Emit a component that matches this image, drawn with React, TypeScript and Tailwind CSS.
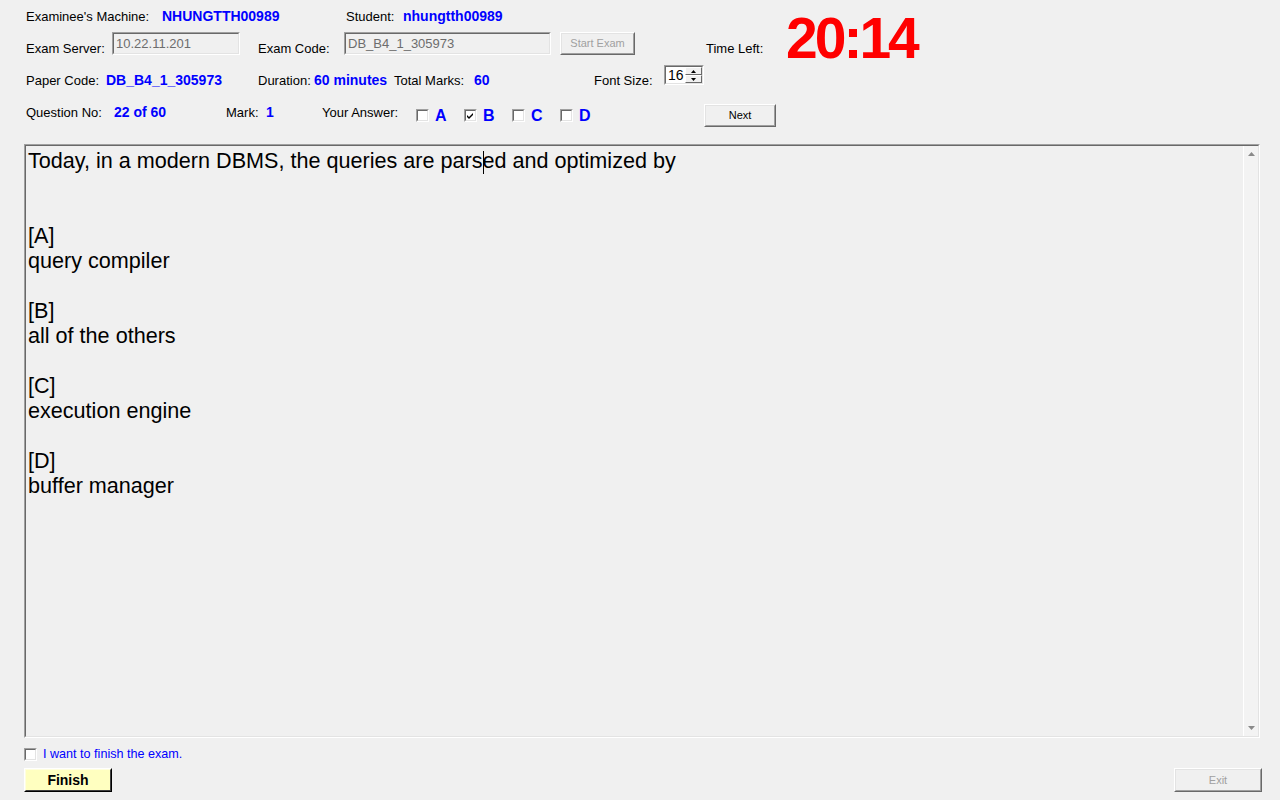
import React from "react";

function CheckBox({ checked = false }: { checked?: boolean }) {
  return (
    <div className="w-[13px] h-[13px] shrink-0 border border-t-[#a0a0a0] border-l-[#a0a0a0] border-r-white border-b-white">
      <div className="w-full h-full bg-white border border-t-[#696969] border-l-[#696969] border-r-[#e3e3e3] border-b-[#e3e3e3] flex items-center justify-center">
        {checked && (
          <svg width="7" height="7" viewBox="0 0 7 7">
            <path d="M0 3 L2 5 L6 1 L6 3 L2 7 L0 5 Z" fill="#000" />
          </svg>
        )}
      </div>
    </div>
  );
}

function Raised({
  className = "",
  inner = "",
  children,
}: {
  className?: string;
  inner?: string;
  children: React.ReactNode;
}) {
  return (
    <div className={`shrink-0 border border-t-white border-l-white border-r-[#696969] border-b-[#696969] ${className}`}>
      <div className={`w-full h-full border border-t-[#e3e3e3] border-l-[#e3e3e3] border-r-[#a0a0a0] border-b-[#a0a0a0] flex items-center justify-center text-[11px] ${inner}`}>
        {children}
      </div>
    </div>
  );
}

function Sunken({ className = "", children }: { className?: string; children?: React.ReactNode }) {
  return (
    <div className={`shrink-0 border border-t-[#a0a0a0] border-l-[#a0a0a0] border-r-white border-b-white ${className}`}>
      <div className="w-full h-full border border-t-[#696969] border-l-[#696969] border-r-[#e3e3e3] border-b-[#e3e3e3] flex items-center">
        {children}
      </div>
    </div>
  );
}

function Option({ letter, checked = false }: { letter: string; checked?: boolean }) {
  return (
    <div className="w-[48px] flex items-start">
      <div className="mt-[13px]">
        <CheckBox checked={checked} />
      </div>
      <span className="ml-[6px] mt-[12px] text-[16px] leading-[16px] font-bold text-[#0000ff]">{letter}</span>
    </div>
  );
}

const lines: string[] = [
  "",
  "",
  "[A]",
  "query compiler",
  "",
  "[B]",
  "all of the others",
  "",
  "[C]",
  "execution engine",
  "",
  "[D]",
  "buffer manager",
];

export default function App() {
  const lbl = "text-[13px] leading-[15px] text-black shrink-0";
  const val = "text-[14px] leading-[16px] font-bold text-[#0000ff] shrink-0";

  return (
    <div className="w-[1280px] h-[800px] bg-[#f0f0f0] font-['Liberation_Sans',Arial,sans-serif] text-black overflow-hidden flex flex-col">
      {/* Header */}
      <div className="flex">
        <div className="w-[786px] flex flex-col shrink-0">
          {/* Row 1 */}
          <div className="h-[32px] pl-[26px] flex items-center">
            <span className={`${lbl} w-[136px]`}>Examinee's Machine:</span>
            <span className={`${val} w-[184px]`}>NHUNGTTH00989</span>
            <span className={`${lbl} w-[57px]`}>Student:</span>
            <span className={val}>nhungtth00989</span>
          </div>

          {/* Row 2 */}
          <div className="h-[32px] pl-[26px] flex items-start">
            <span className={`${lbl} w-[86px] mt-[9px]`}>Exam Server:</span>
            <Sunken className="w-[128px] h-[23px]">
              <span className="pl-[2px] text-[13px] text-[#6d6d6d]">10.22.11.201</span>
            </Sunken>
            <span className={`${lbl} w-[86px] ml-[18px] mt-[9px]`}>Exam Code:</span>
            <Sunken className="w-[207px] h-[23px]">
              <span className="pl-[2px] text-[13px] text-[#6d6d6d]">DB_B4_1_305973</span>
            </Sunken>
            <Raised className="w-[75px] h-[23px] ml-[9px]" inner="text-[#a0a0a0]">
              Start Exam
            </Raised>
            <span className={`${lbl} ml-[71px] mt-[9px]`}>Time Left:</span>
          </div>

          {/* Row 3 */}
          <div className="h-[32px] pl-[26px] flex items-start">
            <span className={`${lbl} w-[80px] mt-[9px]`}>Paper Code:</span>
            <span className={`${val} w-[152px] mt-[8px]`}>DB_B4_1_305973</span>
            <span className={`${lbl} w-[56px] mt-[9px]`}>Duration:</span>
            <span className={`${val} w-[80px] mt-[8px]`}>60 minutes</span>
            <span className={`${lbl} w-[80px] mt-[9px]`}>Total Marks:</span>
            <span className={`${val} w-[120px] mt-[8px]`}>60</span>
            <span className={`${lbl} w-[70px] mt-[9px]`}>Font Size:</span>
            <Sunken className="w-[40px] h-[20px] mt-[1px]">
              <div className="flex-1 h-full bg-white flex items-center pl-[2px] text-[14px] leading-none">16</div>
              <div className="w-[17px] h-full flex flex-col bg-[#f0f0f0]">
                <div className="flex-1 border border-t-white border-l-white border-r-[#696969] border-b-[#696969] flex items-center justify-center">
                  <svg width="5" height="3" viewBox="0 0 5 3">
                    <path d="M2.5 0 L5 3 L0 3 Z" fill="#000" />
                  </svg>
                </div>
                <div className="flex-1 border border-t-white border-l-white border-r-[#696969] border-b-[#696969] flex items-center justify-center">
                  <svg width="5" height="3" viewBox="0 0 5 3">
                    <path d="M0 0 L5 0 L2.5 3 Z" fill="#000" />
                  </svg>
                </div>
              </div>
            </Sunken>
          </div>

          {/* Row 4 */}
          <div className="h-[48px] pl-[26px] flex items-start">
            <span className={`${lbl} w-[88px] mt-[9px]`}>Question No:</span>
            <span className={`${val} w-[112px] mt-[8px]`}>22 of 60</span>
            <span className={`${lbl} w-[40px] mt-[9px]`}>Mark:</span>
            <span className={`${val} w-[56px] mt-[8px]`}>1</span>
            <span className={`${lbl} w-[94px] mt-[9px]`}>Your Answer:</span>
            <Option letter="A" />
            <Option letter="B" checked />
            <Option letter="C" />
            <Option letter="D" />
            <Raised className="w-[72px] h-[23px] ml-[96px] mt-[8px]" inner="text-black">
              Next
            </Raised>
          </div>
        </div>

        {/* Timer */}
        <div className="mt-[10px] text-[57px] leading-none font-bold text-[#ff0000] tracking-[-3px]">20:14</div>
      </div>

      {/* Question area */}
      <div className="ml-[24px] w-[1236px] h-[594px] border border-t-[#a0a0a0] border-l-[#a0a0a0] border-r-white border-b-white">
        <div className="w-full h-full border border-t-[#696969] border-l-[#696969] border-r-[#e3e3e3] border-b-[#e3e3e3] flex">
          <div className="flex-1 pl-[2px] pt-[2px] text-[21.6px] leading-[25px] text-black">
            <div className="h-[25px] whitespace-nowrap">
              Today, in a modern DBMS, the queries are pars
              <span className="inline-block w-px h-[23px] bg-black align-[-6px] -mr-px" />
              ed and optimized by
            </div>
            {lines.map((t, i) => (
              <div key={i} className="h-[25px] whitespace-nowrap">
                {t}
              </div>
            ))}
          </div>
          <div className="w-[15px] h-full border-l border-l-white bg-[#f3f3f3] flex flex-col justify-between items-center py-[6px]">
            <svg width="7" height="4" viewBox="0 0 7 4">
              <path d="M3.5 0 L7 4 L0 4 Z" fill="#8a8a8a" />
            </svg>
            <svg width="7" height="4" viewBox="0 0 7 4">
              <path d="M0 0 L7 0 L3.5 4 Z" fill="#8a8a8a" />
            </svg>
          </div>
        </div>
      </div>

      {/* Finish checkbox */}
      <div className="mt-[10px] pl-[24px] flex items-center h-[13px]">
        <CheckBox />
        <span className="ml-[6px] text-[12.6px] leading-[15px] text-[#0000ff]">I want to finish the exam.</span>
      </div>

      {/* Buttons */}
      <div className="mt-[7px] flex justify-between pl-[24px] pr-[18px]">
        <div className="w-[88px] h-[24px] border border-t-white border-l-white border-r-black border-b-black">
          <div className="w-full h-full bg-[#ffffc0] border border-t-[#ffffe0] border-l-[#ffffe0] border-r-[#404040] border-b-[#404040] flex items-center justify-center text-[14px] font-bold">
            Finish
          </div>
        </div>
        <Raised className="w-[88px] h-[24px]" inner="text-[#a0a0a0]">
          Exit
        </Raised>
      </div>
    </div>
  );
}
